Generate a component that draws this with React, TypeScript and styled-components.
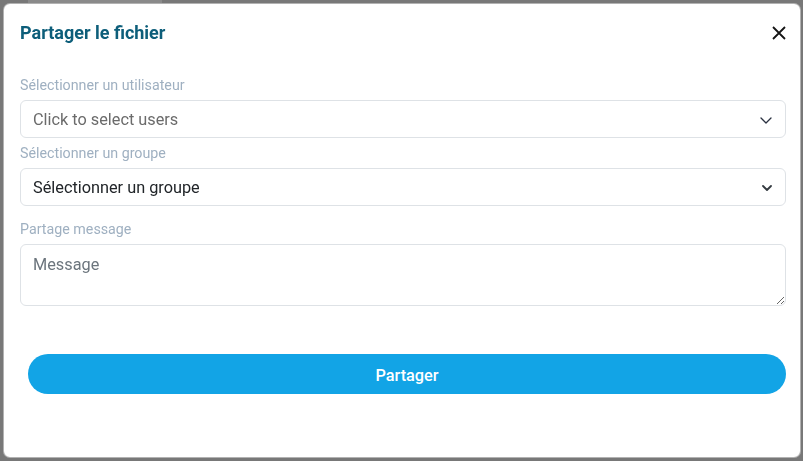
import React from "react";
import styled, { createGlobalStyle } from "styled-components";

const GlobalStyle = createGlobalStyle`
  html, body { margin: 0; padding: 0; height: 100%; }
  body {
    background: #787878;
    font-family: Roboto, "Noto Sans", "Liberation Sans", sans-serif;
    overflow: hidden;
  }
  * { box-sizing: border-box; }
`;

const Underlay = styled.div`
  height: 100vh;
  display: flex;
  flex-direction: column;
  padding-left: 28px;
`;

const UnderChip = styled.div`
  width: 134px;
  height: 3px;
  background: #8a8a8a;
`;

const Backdrop = styled.div`
  position: fixed;
  inset: 0;
  display: flex;
  padding: 3px 2px 3px 3px;
`;

const Dialog = styled.div`
  flex: 1;
  background: #fff;
  border: 1px solid rgba(0, 0, 0, 0.3);
  border-radius: 7px;
  display: flex;
  flex-direction: column;
  padding: 0 14px 0 16px;
`;

const Header = styled.div`
  height: 58px;
  display: flex;
  align-items: center;
  justify-content: space-between;
`;

const Title = styled.h2`
  margin: 0;
  font-size: 18px;
  line-height: 22px;
  font-weight: 700;
  color: #0d5e7a;
`;

const CloseButton = styled.button`
  border: 0;
  background: transparent;
  padding: 0;
  width: 14px;
  height: 14px;
  display: flex;
  cursor: pointer;
`;

const Body = styled.div`
  display: flex;
  flex-direction: column;
  padding-top: 15px;
`;

const Field = styled.div<{ $gap: number }>`
  display: flex;
  flex-direction: column;
  margin-bottom: ${(p) => p.$gap}px;
`;

const Label = styled.label`
  font-size: 14.25px;
  line-height: 17px;
  color: #9fb0c1;
  margin-bottom: 6px;
`;

const SelectBox = styled.div`
  height: 38px;
  border: 1px solid #dee2e6;
  border-radius: 6px;
  display: flex;
  align-items: center;
  justify-content: space-between;
  padding: 2px 13px 0 12px;
  cursor: pointer;
`;

const SelectText = styled.span<{ $placeholder?: boolean }>`
  font-size: 16.3px;
  line-height: 24px;
  color: ${(p) => (p.$placeholder ? "#6b6b6b" : "#212529")};
`;

const MessageArea = styled.textarea`
  height: 62px;
  border: 1px solid #dee2e6;
  border-radius: 6px;
  padding: 8px 12px 4px;
  font-family: inherit;
  font-size: 16.3px;
  line-height: 24px;
  color: #212529;
  resize: vertical;
  outline: none;
  &::placeholder { color: #6c757d; }
`;

const Footer = styled.div`
  display: flex;
  padding: 48px 0 0 8px;
`;

const ShareButton = styled.button`
  flex: 1;
  height: 40px;
  border: 0;
  border-radius: 20px;
  background: #12a4e6;
  color: #fff;
  font-family: inherit;
  font-size: 16.3px;
  font-weight: 500;
  padding: 2px 0 0;
  cursor: pointer;
`;

const Chevron = ({ bold }: { bold?: boolean }) =>
  bold ? (
    <svg width="10" height="6" viewBox="0 0 10 6" fill="none">
      <path d="M1 1l4 4 4-4" stroke="#343a40" strokeWidth="1.8" strokeLinecap="round" strokeLinejoin="round" />
    </svg>
  ) : (
    <svg width="12" height="7" viewBox="0 0 12 7" fill="none">
      <path d="M1 1l5 5 5-5" stroke="#2a3140" strokeWidth="1.3" strokeLinecap="round" strokeLinejoin="round" />
    </svg>
  );

export default function App() {
  return (
    <>
      <GlobalStyle />
      <Underlay>
        <UnderChip />
      </Underlay>
      <Backdrop>
        <Dialog>
          <Header>
            <Title>Partager le fichier</Title>
            <CloseButton aria-label="Fermer">
              <svg width="14" height="14" viewBox="0 0 14 14">
                <path d="M1 1l12 12M13 1L1 13" stroke="#141414" strokeWidth="1.8" />
              </svg>
            </CloseButton>
          </Header>
          <Body>
            <Field $gap={7}>
              <Label>Sélectionner un utilisateur</Label>
              <SelectBox>
                <SelectText $placeholder>Click to select users</SelectText>
                <Chevron />
              </SelectBox>
            </Field>
            <Field $gap={15}>
              <Label>Sélectionner un groupe</Label>
              <SelectBox>
                <SelectText>Sélectionner un groupe</SelectText>
                <Chevron bold />
              </SelectBox>
            </Field>
            <Field $gap={0}>
              <Label>Partage message</Label>
              <MessageArea placeholder="Message" />
            </Field>
          </Body>
          <Footer>
            <ShareButton>Partager</ShareButton>
          </Footer>
        </Dialog>
      </Backdrop>
    </>
  );
}
